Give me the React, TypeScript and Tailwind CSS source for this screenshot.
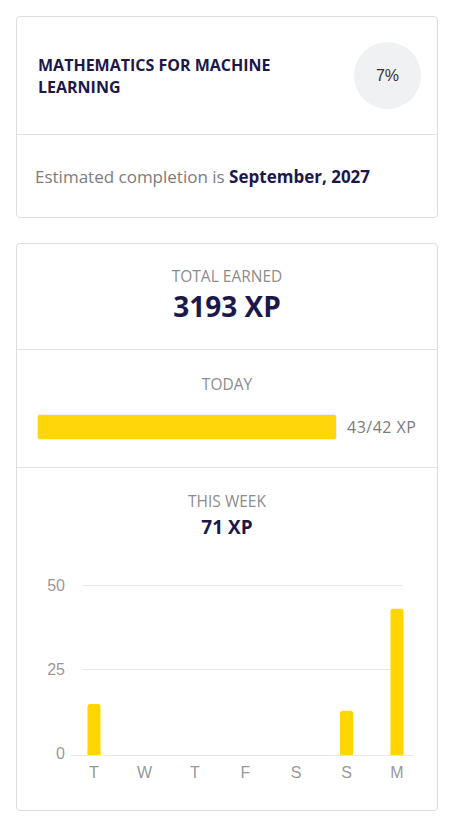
import React from "react"

const days = [
  { label: "T", xp: 15 },
  { label: "W", xp: 0 },
  { label: "T", xp: 0 },
  { label: "F", xp: 0 },
  { label: "S", xp: 0 },
  { label: "S", xp: 13 },
  { label: "M", xp: 43 },
]

function WeekChart() {
  const base = 195
  const scale = 3.4
  return (
    <svg width="421" height="230" viewBox="0 0 421 230" className="block">
      <line x1="66" x2="385" y1="25.5" y2="25.5" stroke="#e6e6e6" />
      <line x1="66" x2="385" y1="109.5" y2="109.5" stroke="#e6e6e6" />
      <line x1="54" x2="396" y1="195.5" y2="195.5" stroke="#e6e6e6" />
      {[
        { v: "50", y: 25 },
        { v: "25", y: 109 },
        { v: "0", y: 193 },
      ].map((t) => (
        <text
          key={t.v}
          x="48"
          y={t.y + 6}
          textAnchor="end"
          fontSize="16"
          fill="#999"
          fontFamily="'Liberation Sans', Arial, sans-serif"
        >
          {t.v}
        </text>
      ))}
      {days.map((d, i) => {
        const cx = 77 + i * 50.5
        const h = d.xp * scale
        return (
          <g key={i}>
            {h > 0 && (
              <rect x={cx - 6.5} y={base - h} width="13" height={h} rx="2.5" fill="#ffd600" />
            )}
            {h > 0 && <rect x={cx - 6.5} y={base - 4} width="13" height="4" fill="#ffd600" />}
            <text
              x={cx}
              y="218"
              textAnchor="middle"
              fontSize="16"
              fill="#999"
              fontFamily="'Liberation Sans', Arial, sans-serif"
            >
              {d.label}
            </text>
          </g>
        )
      })}
    </svg>
  )
}

export default function App() {
  return (
    <div
      className="min-h-screen bg-white px-4 pt-4 pb-4"
      style={{ fontFamily: "'Open Sans', 'Noto Sans', sans-serif" }}
    >
      {/* Course card */}
      <div className="w-[422px] rounded border border-[#dedede] bg-white">
        <div className="flex h-[118px] items-center justify-between border-b border-[#e3e3e3] pl-[21px] pr-[16px]">
          <h2 className="w-[280px] text-[16px] font-bold leading-[22px] text-[#1c1849]">
            MATHEMATICS FOR MACHINE LEARNING
          </h2>
          <div className="flex h-[67px] w-[67px] items-center justify-center rounded-full bg-[#f0f1f3] text-[16px] text-[#333] [font-family:'Liberation_Sans',Arial,sans-serif]">
            7%
          </div>
        </div>
        <div className="flex h-[82px] items-center pl-[18px] pt-[1px]">
          <p className="text-[17px] text-[#7c7c7c]">
            Estimated completion is{" "}
            <span className="font-bold text-[#1c1849]">September, 2027</span>
          </p>
        </div>
      </div>

      {/* XP card */}
      <div className="mt-[25px] w-[422px] rounded border border-[#dedede] bg-white">
        <div className="flex h-[106px] flex-col items-center border-b border-[#e3e3e3] pt-[21px]">
          <div className="text-[15.5px] leading-[22px] text-[#8c8c8c]">TOTAL EARNED</div>
          <div className="mt-[1px] text-[28px] font-bold leading-[36px] text-[#1c1849]">3193 XP</div>
        </div>
        <div className="flex h-[118px] flex-col border-b border-[#e3e3e3] pt-[23px]">
          <div className="text-center text-[15.5px] leading-[22px] text-[#8c8c8c]">TODAY</div>
          <div className="mt-[19px] flex items-center pl-[20px]">
            <div className="h-[26px] w-[300px] rounded-[3px] border border-[#eee] bg-[#ffd60a]" />
            <div className="ml-[10px] text-[16px] tracking-[0.5px] text-[#7c7c7c]">43/42 XP</div>
          </div>
        </div>
        <div className="flex flex-col items-center pt-[22px] pb-[20px]">
          <div className="text-[15.5px] leading-[22px] text-[#8c8c8c]">THIS WEEK</div>
          <div className="mt-[2px] text-[19px] font-bold leading-[26px] text-[#1c1849]">71 XP</div>
          <div className="mt-[20px] self-start">
            <WeekChart />
          </div>
        </div>
      </div>
    </div>
  )
}
